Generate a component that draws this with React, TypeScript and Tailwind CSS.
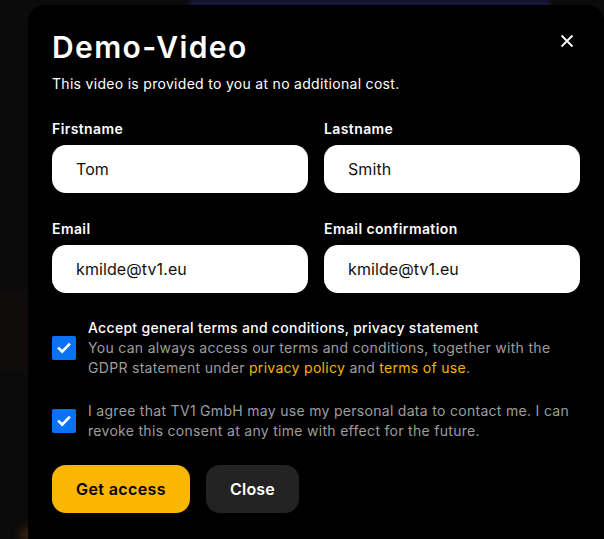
import React from "react";

const font = { fontFamily: "Inter, 'Noto Sans', sans-serif" };

function Field({ label, value }: { label: string; value: string }) {
  return (
    <div className="flex flex-col">
      <label className="text-[14px] font-semibold leading-5 tracking-[0.4px] text-white">{label}</label>
      <div className="mt-[6px] flex h-[48px] items-center rounded-[14px] bg-white px-6 text-[16px] tracking-[0.1px] text-[#111]">
        {value}
      </div>
    </div>
  );
}

function Check() {
  return (
    <div className="flex h-6 w-6 shrink-0 items-center justify-center rounded-[2px] bg-[#0a72f5]">
      <svg width="16" height="16" viewBox="0 0 16 16" fill="none">
        <path d="M3 8.5l3.2 3.2L13 4.5" stroke="white" strokeWidth="2.6" strokeLinecap="square" />
      </svg>
    </div>
  );
}

export default function App() {
  return (
    <div className="relative h-[539px] w-[604px] overflow-hidden bg-[#0b0b0b]" style={font}>
      <div className="absolute left-[190px] top-0 h-[8px] w-[360px] bg-[#1a1840] blur-[2px]" />
      <div className="absolute left-0 top-[290px] h-[80px] w-[28px] bg-[#100c0b]" />
      <div className="absolute left-[20px] top-[528px] h-[14px] w-[30px] rounded-full bg-[#3a2410] blur-[4px]" />
      <div className="relative ml-[28px] mt-[5px] h-[560px] w-[576px] rounded-[16px] bg-black px-6 pt-[23px]">
        <button className="absolute right-[30px] top-[29px] text-white">
          <svg width="14" height="14" viewBox="0 0 14 14">
            <path d="M1.5 1.5l11 11M12.5 1.5l-11 11" stroke="white" strokeWidth="1.8" />
          </svg>
        </button>
        <h1 className="text-[30px] font-semibold leading-[38px] tracking-[1.4px] text-white">Demo-Video</h1>
        <p className="mt-[8px] text-[14px] leading-5 tracking-[0.3px] text-white">
          This video is provided to you at no additional cost.
        </p>
        <div className="mt-[25px] grid grid-cols-2 gap-x-4 gap-y-[26px]">
          <Field label="Firstname" value="Tom" />
          <Field label="Lastname" value="Smith" />
          <Field label="Email" value="kmilde@tv1.eu" />
          <Field label="Email confirmation" value="kmilde@tv1.eu" />
        </div>
        <div className="mt-[25px] flex items-center gap-3">
          <Check />
          <div className="text-[14px] leading-5 tracking-[0.3px]">
            <div className="font-medium text-white">Accept general terms and conditions, privacy statement</div>
            <div className="text-[#9d9d9d]">
              You can always access our terms and conditions, together with the GDPR statement under{" "}
              <span className="text-[#f5b400]">privacy policy</span> and{" "}
              <span className="text-[#f5b400]">terms of use</span>.
            </div>
          </div>
        </div>
        <div className="mt-[23px] flex items-center gap-3">
          <Check />
          <div className="text-[14px] leading-5 tracking-[0.3px] text-[#9d9d9d]">
            I agree that TV1 GmbH may use my personal data to contact me. I can revoke this consent at any
            time with effect for the future.
          </div>
        </div>
        <div className="mt-[24px] flex gap-4">
          <button className="h-[48px] rounded-[14px] bg-[#fbb700] px-6 text-[16px] font-semibold tracking-[0.4px] text-black">
            Get access
          </button>
          <button className="h-[48px] rounded-[14px] bg-[#232323] px-6 text-[16px] font-semibold tracking-[0.2px] text-white">
            Close
          </button>
        </div>
      </div>
    </div>
  );
}
